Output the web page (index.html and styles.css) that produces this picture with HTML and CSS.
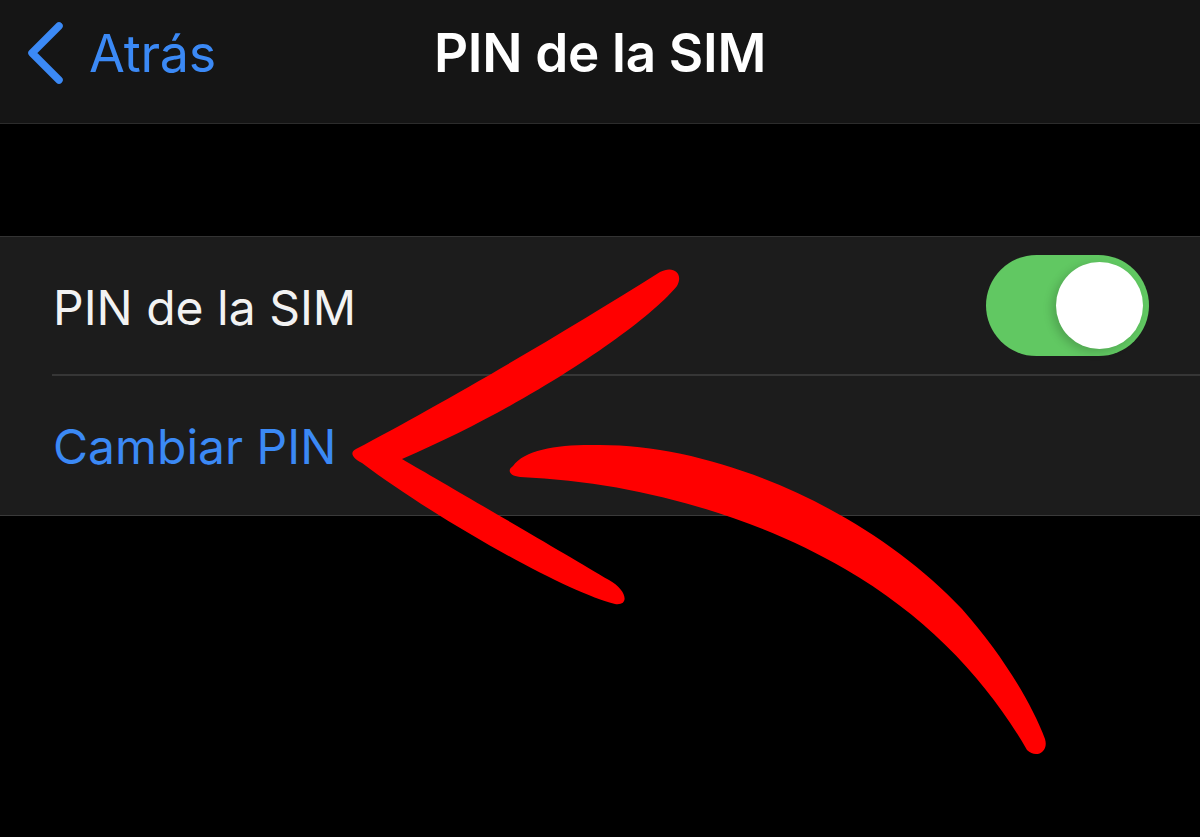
FILE: index.html
```html
<!DOCTYPE html>
<html lang="es">
<head>
<meta charset="utf-8">
<title>PIN de la SIM</title>
<link rel="stylesheet" href="styles.css">
</head>
<body>
<div class="screen">
  <header class="nav">
    <div class="nav-left">
      <svg class="chevron" width="40" height="64" viewBox="0 0 40 64"><path d="M32 4 L5 31 L32 58" fill="none" stroke="#3b89f5" stroke-width="7.5" stroke-linecap="round" stroke-linejoin="round"/></svg>
      <span class="back-label">Atrás</span>
    </div>
    <h1 class="nav-title">PIN de la SIM</h1>
    <div class="nav-right"></div>
  </header>
  <div class="spacer"></div>
  <section class="group">
    <div class="row">
      <span class="row-label">PIN de la SIM</span>
      <div class="toggle"><div class="knob"></div></div>
    </div>
    <div class="row">
      <span class="row-label link">Cambiar PIN</span>
    </div>
  </section>
  <svg class="annotation" width="1200" height="837" viewBox="0 0 1200 837">
    <path fill="#ff0000" d="M356 449 C 440 405 560 335 660 272 C 673 265 684 273 677 286 C 648 322 535 402 402 459 C 452 488 562 552 609 580 C 627 590 630 606 615 604 C 565 592 432 516 362 463 C 351 457 350 452 356 449 Z"/>
    <path fill="#ff0000" d="M513 466 C 525 449 560 444 600 445 C 722 445 872 513 962 609 C 1002 654 1032 704 1045 739 C 1049 752 1036 759 1027 750 C 988 682 928 617 845 569 C 758 518 640 482 520 477 C 509 476 507 470 513 466 Z"/>
  </svg>
</div>
</body>
</html>
```

FILE: styles.css
```css
* { box-sizing: border-box; }
html, body { margin: 0; padding: 0; }
body {
  background: #000;
  font-family: Inter, "Noto Sans", "Liberation Sans", sans-serif;
  color: #fff;
}
.screen {
  position: relative;
  width: 1200px;
  height: 837px;
  overflow: hidden;
  background: #000;
}
.nav {
  height: 124px;
  background: #151515;
  border-bottom: 1px solid #2c2c2c;
  display: grid;
  grid-template-columns: 1fr auto 1fr;
  align-items: center;
  padding: 0 0 17px 0;
}
.nav-left {
  display: flex;
  align-items: center;
  padding-left: 27px;
  gap: 22px;
}
.chevron { display: block; margin-top: 2px; }
.back-label {
  color: #3b89f5;
  font-size: 52px;
  font-weight: 400;
  letter-spacing: -0.2px;
}
.nav-title {
  margin: 0;
  font-size: 53px;
  font-weight: 600;
  letter-spacing: -0.3px;
  color: #fff;
}
.spacer { height: 112px; }
.group {
  background: #1c1c1c;
  border-top: 1px solid #333;
  border-bottom: 1px solid #3a3a3a;
}
.row {
  height: 139px;
  display: flex;
  align-items: center;
  justify-content: space-between;
  padding: 0 51px 0 53px;
  position: relative;
}
.row:first-child::after {
  content: "";
  position: absolute;
  left: 52px;
  right: 0;
  bottom: 0;
  height: 2px;
  background: #363636;
}
.row-label {
  font-size: 48px;
  font-weight: 400;
  color: #f2f2f2;
  letter-spacing: 0;
  margin-top: 2px;
}
.row-label.link { color: #3b89f5; }
.toggle {
  width: 163px;
  height: 101px;
  border-radius: 51px;
  background: #61c862;
  position: relative;
  margin-top: -3px;
}
.knob {
  position: absolute;
  right: 6px;
  top: 7px;
  width: 87px;
  height: 87px;
  border-radius: 50%;
  background: #fff;
  box-shadow: -4px 3px 10px rgba(0,0,0,0.18);
}
.annotation {
  position: absolute;
  left: 0;
  top: 0;
  pointer-events: none;
}
```
